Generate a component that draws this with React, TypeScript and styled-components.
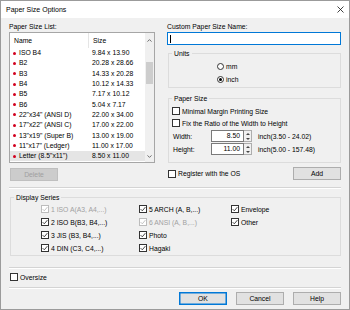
import React from "react";
import styled, { createGlobalStyle } from "styled-components";

const GlobalStyle = createGlobalStyle`
  html, body { margin: 0; padding: 0; background: #fff; }
  body {
    font-family: "Liberation Sans", Arial, sans-serif;
    font-size: 6.8px;
    color: #000;
  }
  * { box-sizing: border-box; }
`;

const Window = styled.div`
  width: 350px;
  height: 310px;
  border: 1px solid #9b9b9b;
  background: #f0f0f0;
  display: flex;
  flex-direction: column;
  overflow: hidden;
`;

const TitleBar = styled.div`
  height: 17px;
  flex: none;
  background: #fff;
  display: flex;
  align-items: center;
  justify-content: space-between;
  padding: 0 5px 0 5px;
  font-size: 7px;
`;

const Body = styled.div`
  display: flex;
  flex-direction: column;
  padding: 0 8px;
`;

const TopRow = styled.div`
  display: flex;
  gap: 12px;
`;

const LeftCol = styled.div`
  width: 146px;
  display: flex;
  flex-direction: column;
`;

const RightCol = styled.div`
  flex: 1;
  display: flex;
  flex-direction: column;
`;

const Label = styled.div`
  margin-top: 4px;
  line-height: 9px;
  height: 9px;
`;

const ListBox = styled.div`
  margin-top: 1px;
  height: 131px;
  border: 1px solid #a6a6a6;
  background: #fff;
  display: flex;
`;

const ListContent = styled.div`
  flex: 1;
  display: flex;
  flex-direction: column;
`;

const ListHeader = styled.div`
  height: 15px;
  display: grid;
  grid-template-columns: 79px 1fr;
  align-items: center;
  span {
    padding-left: 4px;
    line-height: 15px;
  }
  span:first-child {
    border-right: 1px solid #e5e5e5;
  }
`;

const Row = styled.div<{ $selected?: boolean }>`
  height: 10.3px;
  display: grid;
  grid-template-columns: 79px 1fr;
  align-items: center;
  background: ${p => (p.$selected ? "#e5e5e5" : "transparent")};
  line-height: 10px;
`;

const NameCell = styled.span`
  display: flex;
  align-items: center;
  padding-left: 3px;
  gap: 3px;
  white-space: nowrap;
`;

const Bullet = styled.i`
  width: 3px;
  height: 3px;
  border-radius: 50%;
  background: #d2001e;
  flex: none;
`;

const SizeCell = styled.span`
  padding-left: 3px;
`;

const ScrollBar = styled.div`
  width: 9px;
  background: #f0f0f0;
  display: flex;
  flex-direction: column;
  align-items: center;
`;

const ScrollArrow = styled.div<{ $h: number }>`
  height: ${p => p.$h}px;
  display: flex;
  align-items: center;
  justify-content: center;
`;

const Track = styled.div`
  flex: 1;
  width: 100%;
  padding: 15px 1px 0;
`;

const Thumb = styled.div`
  height: 22px;
  background: #cdcdcd;
`;

const Button = styled.button<{ $default?: boolean; $w?: number }>`
  width: ${p => p.$w ?? 48}px;
  height: 13px;
  padding: 0;
  font-family: inherit;
  font-size: 6.8px;
  color: #000;
  background: #e1e1e1;
  border: 1px solid ${p => (p.$default ? "#0078d7" : "#adadad")};
  box-shadow: ${p => (p.$default ? "inset 0 0 0 0.5px #0078d7" : "none")};
  &:disabled {
    background: #cccccc;
    border-color: #bfbfbf;
    color: #a0a0a0;
  }
`;

const DeleteButton = styled(Button)`
  margin: 5px 0 0 1px;
`;

const TextInput = styled.div`
  margin-top: 1px;
  height: 13px;
  border: 1px solid #0078d7;
  background: #fff;
  display: flex;
  align-items: center;
  padding-left: 2px;
`;

const Caret = styled.i`
  width: 1px;
  height: 8px;
  background: #000;
`;

const Group = styled.fieldset<{ $mt: number; $pb: number }>`
  margin: ${p => p.$mt}px 0 0 1px;
  padding: 0 0 ${p => p.$pb}px 0;
  border: 1px solid #dcdcdc;
  min-width: 0;
  legend {
    margin-left: 3px;
    padding: 0 2px;
    line-height: 9px;
    height: 9px;
  }
`;

const GroupRows = styled.div<{ $pl: number; $pt: number; $gap: number }>`
  display: flex;
  flex-direction: column;
  padding: ${p => p.$pt}px 0 0 ${p => p.$pl}px;
  gap: ${p => p.$gap}px;
`;

const OptionRow = styled.label`
  height: 10px;
  display: flex;
  align-items: center;
  gap: 2px;
  white-space: nowrap;
`;

const OptionText = styled.span<{ $disabled?: boolean }>`
  color: ${p => (p.$disabled ? "#a0a0a0" : "#000")};
`;

const CheckBox = styled.span<{ $disabled?: boolean }>`
  width: 8px;
  height: 8px;
  flex: none;
  border: 1px solid ${p => (p.$disabled ? "#bcbcbc" : "#333")};
  background: #fff;
  color: ${p => (p.$disabled ? "#bcbcbc" : "#333")};
  display: flex;
  align-items: center;
  justify-content: center;
`;

const RadioCircle = styled.span<{ $on?: boolean }>`
  width: 7px;
  height: 7px;
  flex: none;
  border: 1px solid #333;
  border-radius: 50%;
  background: #fff;
  display: flex;
  align-items: center;
  justify-content: center;
  &::after {
    content: "";
    width: 3px;
    height: 3px;
    border-radius: 50%;
    background: ${p => (p.$on ? "#000" : "transparent")};
  }
`;

const SizeRow = styled.div`
  height: 12px;
  display: flex;
  align-items: center;
  padding-left: 4px;
`;

const SizeLabel = styled.span`
  width: 38px;
`;

const NumberBox = styled.div`
  width: 33px;
  height: 12px;
  border: 1px solid #7a7a7a;
  background: #fff;
  text-align: right;
  line-height: 10px;
  padding-right: 3px;
`;

const Spinner = styled.div`
  width: 8px;
  height: 12px;
  border: 1px solid #adadad;
  border-left: none;
  background: #f0f0f0;
  display: flex;
  flex-direction: column;
  align-items: center;
  justify-content: space-around;
  margin-right: 6px;
`;

const Tri = styled.i<{ $up?: boolean }>`
  width: 0;
  height: 0;
  border-left: 2px solid transparent;
  border-right: 2px solid transparent;
  ${p =>
    p.$up ? "border-bottom: 2px solid #444;" : "border-top: 2px solid #444;"}
`;

const ActionRow = styled.div`
  margin-top: 4px;
  height: 13px;
  display: flex;
  align-items: center;
  justify-content: space-between;
  padding-left: 1px;
`;

const Separator = styled.div<{ $mt: number }>`
  margin-top: ${p => p.$mt}px;
  height: 2px;
  border-top: 1px solid #d4d4d4;
  border-bottom: 1px solid #fff;
`;

const SeriesGrid = styled.div`
  display: grid;
  grid-template-columns: 98px 92px auto;
  grid-auto-flow: column;
  grid-template-rows: repeat(4, 10px);
  row-gap: 3px;
  padding: 2px 0 0 30px;
`;

const BottomRow = styled.div`
  margin-top: 3px;
  height: 10px;
  display: flex;
  align-items: center;
  padding-left: 1px;
`;

const Buttons = styled.div`
  margin-top: 3px;
  display: flex;
  justify-content: flex-end;
  gap: 9px;
`;

const Check = ({ checked, disabled }: { checked?: boolean; disabled?: boolean }) => (
  <CheckBox $disabled={disabled}>
    {checked && (
      <svg width="6" height="6" viewBox="0 0 6 6">
        <path d="M0.6 3.1 L2.3 4.8 L5.4 1.1" fill="none" stroke="currentColor" strokeWidth="0.9" />
      </svg>
    )}
  </CheckBox>
);

const Option = ({
  text,
  checked,
  disabled,
}: {
  text: string;
  checked?: boolean;
  disabled?: boolean;
}) => (
  <OptionRow>
    <Check checked={checked} disabled={disabled} />
    <OptionText $disabled={disabled}>{text}</OptionText>
  </OptionRow>
);

const papers = [
  ["ISO B4", "9.84 x 13.90"],
  ["B2", "20.28 x 28.66"],
  ["B3", "14.33 x 20.28"],
  ["B4", "10.12 x 14.33"],
  ["B5", "7.17 x 10.12"],
  ["B6", "5.04 x 7.17"],
  ['22"x34" (ANSI D)', "22.00 x 34.00"],
  ['17"x22" (ANSI C)', "17.00 x 22.00"],
  ['13"x19" (Super B)', "13.00 x 19.00"],
  ['11"x17" (Ledger)', "11.00 x 17.00"],
  ['Letter (8.5"x11")', "8.50 x 11.00"],
];

const series: [string, boolean, boolean][] = [
  ["1 ISO A(A3, A4,...)", true, true],
  ["2 ISO B(B3, B4,...)", true, false],
  ["3 JIS (B3, B4,...)", true, false],
  ["4 DIN (C3, C4,...)", true, false],
  ["5 ARCH (A, B,...)", true, false],
  ["6 ANSI (A, B,...)", true, true],
  ["Photo", true, false],
  ["Hagaki", true, false],
  ["Envelope", true, false],
  ["Other", true, false],
];

export default function App() {
  return (
    <>
      <GlobalStyle />
      <Window>
        <TitleBar>
          <span>Paper Size Options</span>
          <svg width="7" height="7" viewBox="0 0 7 7">
            <path d="M0.5 0.5 L6.5 6.5 M6.5 0.5 L0.5 6.5" stroke="#111" strokeWidth="0.8" />
          </svg>
        </TitleBar>
        <Body>
          <TopRow>
            <LeftCol>
              <Label>Paper Size List:</Label>
              <ListBox>
                <ListContent>
                  <ListHeader>
                    <span>Name</span>
                    <span>Size</span>
                  </ListHeader>
                  {papers.map(([name, size], i) => (
                    <Row key={name} $selected={i === papers.length - 1}>
                      <NameCell>
                        <Bullet />
                        {name}
                      </NameCell>
                      <SizeCell>{size}</SizeCell>
                    </Row>
                  ))}
                </ListContent>
                <ScrollBar>
                  <ScrollArrow $h={14}>
                    <svg width="5" height="3" viewBox="0 0 5 3">
                      <path d="M0.5 2.6 L2.5 0.6 L4.5 2.6" fill="none" stroke="#606060" strokeWidth="0.9" />
                    </svg>
                  </ScrollArrow>
                  <Track>
                    <Thumb />
                  </Track>
                  <ScrollArrow $h={12}>
                    <svg width="5" height="3" viewBox="0 0 5 3">
                      <path d="M0.5 0.4 L2.5 2.4 L4.5 0.4" fill="none" stroke="#606060" strokeWidth="0.9" />
                    </svg>
                  </ScrollArrow>
                </ScrollBar>
              </ListBox>
              <DeleteButton disabled>Delete</DeleteButton>
            </LeftCol>
            <RightCol>
              <Label>Custom Paper Size Name:</Label>
              <TextInput>
                <Caret />
              </TextInput>
              <Group $mt={4} $pb={3}>
                <legend>Units</legend>
                <GroupRows $pl={48} $pt={3} $gap={3}>
                  <OptionRow>
                    <RadioCircle />
                    <span>mm</span>
                  </OptionRow>
                  <OptionRow>
                    <RadioCircle $on />
                    <span>inch</span>
                  </OptionRow>
                </GroupRows>
              </Group>
              <Group $mt={6} $pb={7}>
                <legend>Paper Size</legend>
                <GroupRows $pl={3} $pt={3} $gap={2}>
                  <Option text="Minimal Margin Printing Size" />
                  <Option text="Fix the Ratio of the Width to Height" />
                </GroupRows>
                <GroupRows $pl={0} $pt={2} $gap={1}>
                  <SizeRow>
                    <SizeLabel>Width:</SizeLabel>
                    <NumberBox>8.50</NumberBox>
                    <Spinner>
                      <Tri $up />
                      <Tri />
                    </Spinner>
                    <span>inch(3.50 - 24.02)</span>
                  </SizeRow>
                  <SizeRow>
                    <SizeLabel>Height:</SizeLabel>
                    <NumberBox>11.00</NumberBox>
                    <Spinner>
                      <Tri $up />
                      <Tri />
                    </Spinner>
                    <span>inch(5.00 - 157.48)</span>
                  </SizeRow>
                </GroupRows>
              </Group>
              <ActionRow>
                <Option text="Register with the OS" />
                <Button>Add</Button>
              </ActionRow>
            </RightCol>
          </TopRow>
          <Separator $mt={6} />
          <Group $mt={4} $pb={2}>
            <legend>Display Series</legend>
            <SeriesGrid>
              {series.map(([text, checked, disabled]) => (
                <Option key={text} text={text} checked={checked} disabled={disabled} />
              ))}
            </SeriesGrid>
          </Group>
          <Separator $mt={11} />
          <BottomRow>
            <Option text="Oversize" />
          </BottomRow>
          <Separator $mt={5} />
          <Buttons>
            <Button $default>OK</Button>
            <Button>Cancel</Button>
            <Button>Help</Button>
          </Buttons>
        </Body>
      </Window>
    </>
  );
}
